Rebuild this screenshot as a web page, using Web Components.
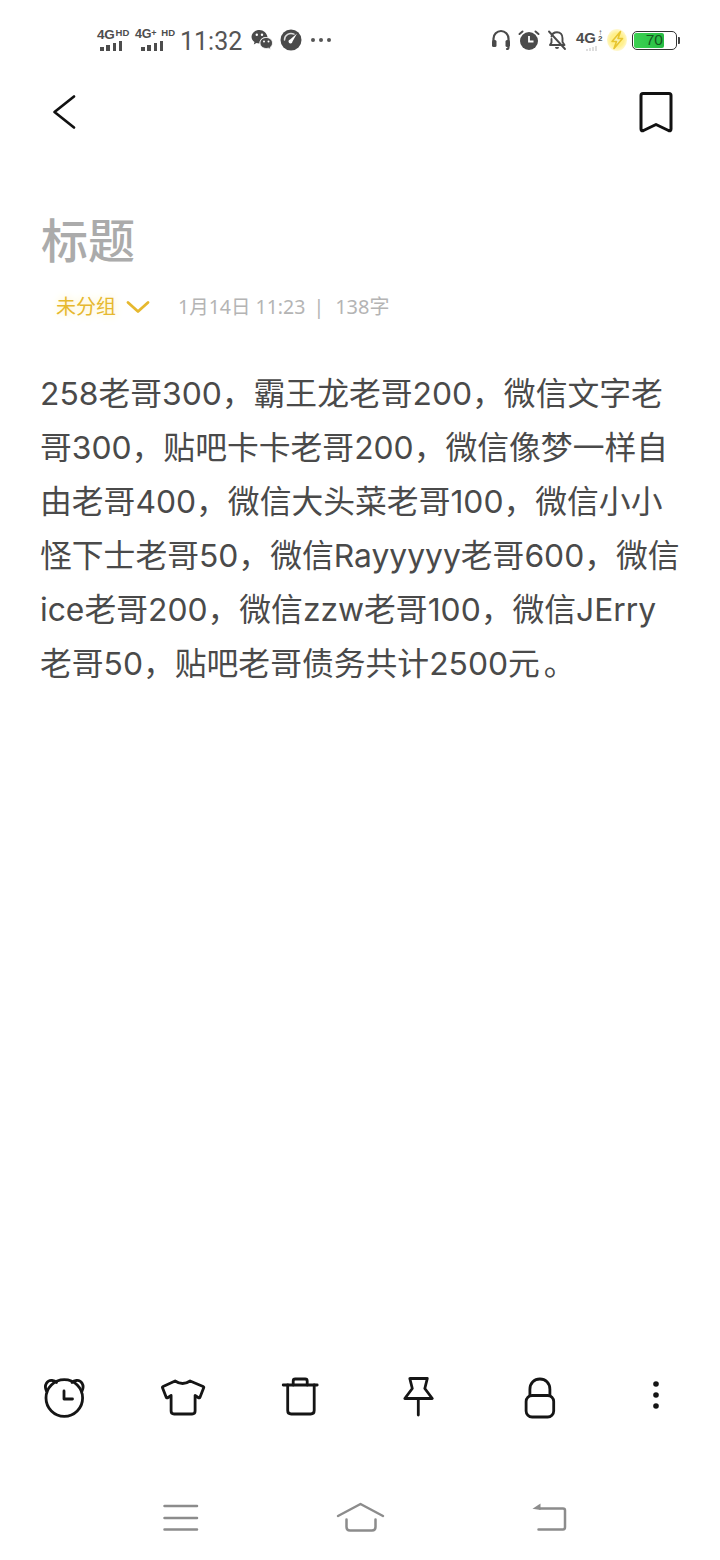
<!DOCTYPE html>
<html lang="zh">
<head>
<meta charset="utf-8">
<title>标题</title>
<style>
html,body{margin:0;padding:0;background:#fff}
body{font-family:"Noto Sans","Noto Sans CJK SC",sans-serif}
</style>
</head>
<body>
<note-page>
  <status-bar></status-bar>
  <top-bar></top-bar>
  <note-title>标题</note-title>
  <note-meta group="未分组" info="1月14日 11:23"  count="138字"></note-meta>
  <note-body>
    <span>258老哥300，霸王龙老哥200，微信文字老</span>
    <span>哥300，贴吧卡卡老哥200，微信像梦一样自</span>
    <span>由老哥400，微信大头菜老哥100，微信小小</span>
    <span>怪下士老哥50，微信Rayyyyy老哥600，微信</span>
    <span>ice老哥200，微信zzw老哥100，微信JErry</span>
    <span>老哥50，贴吧老哥债务共计2500元<b style="font-weight:400;margin-left:4px">。</b></span>
  </note-body>
  <tool-bar></tool-bar>
  <nav-bar></nav-bar>
</note-page>
<script>
const S='fill="none" stroke="currentColor" stroke-linecap="round" stroke-linejoin="round"';
const ICONS={
 back:[32,64,'48 80 32 64',`<path ${S} stroke-width="2.700" d="M74 96.500 54.500 112 74 127.500"/>`],
 bookmark:[48,64,'632 80 48 64',`<path ${S} stroke-width="3" d="M643 93.500H669Q671 93.500 671 95.500V129Q671 131.500 668.500 130.500L656 124.500 643.500 130.500Q641 131.500 641 129V95.500Q641 93.500 643 93.500Z"/>`],
 alarm:[48,48,'40 1374 48 48',`<g ${S} stroke-width="2.800"><circle cx="64.300" cy="1398" r="18.300"/><path d="M64 1391v8h8.500"/><path d="M46.500 1391C43.500 1385 47.500 1380 52 1380.500 54 1380.700 55.500 1381.500 56.500 1382.500"/><path d="M82 1391C85 1385 81 1380 76.500 1380.500 74.500 1380.700 73 1381.500 72 1382.500"/></g>`],
 shirt:[48,48,'158.400 1374 48 48',`<path ${S} stroke-width="2.800" d="M175.500 1381Q183 1386 190.500 1381L203.500 1386.500Q204.500 1387 204 1388L200.500 1397Q200 1398.500 198.500 1397.500L195.500 1395.500V1411Q195.500 1414 192.500 1414H174.500Q171.500 1414 171.500 1411V1395.500L168.500 1397.500Q167 1398.500 166.500 1397L163 1388Q162.500 1387 163.500 1386.500Z"/>`],
 trash:[48,48,'276.800 1374 48 48',`<g ${S} stroke-width="2.800"><path d="M283 1385H317"/><path d="M293 1385V1381Q293 1379 295 1379H305Q307 1379 307 1381V1385"/><path d="M287.500 1385V1410.500Q287.500 1414 291 1414H310.500Q314 1414 314 1410.500V1385"/></g>`],
 pin:[48,48,'395.200 1374 48 48',`<g ${S} stroke-width="2.800"><path d="M410 1378.500H427.500L425 1388.500 432.500 1398.500H405L412.500 1388.500Z"/><path d="M418.500 1398.500V1415"/></g>`],
 lock:[48,48,'513.600 1374 48 48',`<g ${S} stroke-width="2.800"><rect x="525.700" y="1395.500" width="27.600" height="21.500" rx="6"/><path d="M529.500 1395.500V1389.500C529.500 1383 534 1379 539.500 1379S549.500 1383 549.500 1389.500V1395.500"/></g>`],
 more:[48,48,'632 1374 48 48',`<g fill="currentColor"><circle cx="656" cy="1384" r="2.800"/><circle cx="656" cy="1395" r="2.800"/><circle cx="656" cy="1406" r="2.800"/></g>`],
 menu:[48,46,'157 1494 48 46',`<path ${S} stroke-width="2.500" stroke-linecap="butt" d="M164.500 1506H197M164.500 1518H197M164.500 1529.500H197"/>`],
 home:[56,46,'333 1494 56 46',`<g ${S} stroke-width="2.500"><path d="M338 1516 360.500 1504 383 1516"/><path d="M346.500 1519.500V1527Q346.500 1530.500 350 1530.500H372Q375.500 1530.500 375.500 1527V1519.500"/></g>`],
 goback:[48,46,'526 1494 48 46',`<path ${S} stroke-width="2.500" d="M540 1508.500H563Q565 1508.500 565 1510.500V1527Q565 1529.500 563 1529.500H538.500"/><path fill="currentColor" d="M532.500 1508.800 540.500 1503.500V1510Z"/>`],
 chevron:[26,14,'0 0 26 14',`<path ${S} stroke-width="2.800" d="M3 2.500 13 11.500 23 2.500"/>`],
 wechat:[22,22,'0 0 22 22',`<path fill="currentColor" d="M8.500 1C4 1 .5 4 .5 7.800c0 2.200 1.200 4 3 5.200l-.7 2.400 2.800-1.400c.8.200 1.700.4 2.600.4 0 0 .3 0 .4 0C8.300 11 11 8 15.500 8c.4 0 .7 0 1 .1C15.800 4 12.500 1 8.500 1Z"/><path fill="currentColor" d="M21.500 14c0-3.200-3-5.500-6.200-5.500-3.500 0-6.300 2.400-6.300 5.500s2.800 5.500 6.300 5.500c.8 0 1.500-.1 2.200-.3l2.300 1.300-.6-2.100c1.400-1 2.300-2.500 2.300-4.400Z" stroke="#fff" stroke-width=".8"/><g fill="#fff"><circle cx="5.800" cy="5.800" r="1.200"/><circle cx="11" cy="5.800" r="1.200"/><circle cx="13" cy="12.500" r="1"/><circle cx="17.500" cy="12.500" r="1"/></g>`],
 gauge:[22,22,'0 0 22 22',`<circle cx="11" cy="11" r="10.500" fill="currentColor"/><path fill="none" stroke="#ddd" stroke-width="1.500" stroke-linecap="round" d="M4.500 11A6.500 6.500 0 0 1 14 5.200"/><path fill="#fff" d="M17 4.500 12.500 12.500a2 2 0 1 1-2.400-2Z"/>`],
 headset:[20,22,'0 0 20 22',`<g ${S} stroke-width="2.200"><path d="M2.500 12V9.500a7.500 7.500 0 0 1 15 0V12"/><path d="M16 20c1 0 1.500-.5 1.500-1.700"/></g><g fill="currentColor"><rect x="1" y="11" width="4.500" height="7" rx="1.500"/><rect x="14.500" y="11" width="4.500" height="7" rx="1.500"/></g>`],
 salarm:[22,22,'0 0 22 22',`<circle cx="11" cy="12" r="9" fill="currentColor"/><path fill="none" stroke="#fff" stroke-width="1.800" d="M11 7v5.500h4.500"/><path fill="none" stroke="currentColor" stroke-width="2" stroke-linecap="round" d="M1.500 5 4.500 2.500M20.500 5 17.500 2.500"/>`],
 belloff:[20,22,'0 0 20 22',`<g ${S} stroke-width="1.900"><path d="M4.500 7.500C5 5 7 3.200 10 3.200c3.500 0 5.500 2.700 5.500 6V13l2 3H3l1.500-2.500V10"/><path d="M2 2.500 18 20"/></g><path fill="currentColor" d="M8 18h4a2 2 0 0 1-4 0Z"/>`],
 bolt:[20,22,'0 0 20 22',`<path fill="#f6f0b0" stroke="#e8c52e" stroke-width="1.600" stroke-linejoin="round" d="M13.500 2.500 5 12.500h4.500L7 19.500 15.500 9.500H11Z"/>`]
};
function def(name,fn){customElements.define(name,class extends HTMLElement{
  connectedCallback(){ if(this.shadowRoot)return; fn(this,this.attachShadow({mode:'open'})); }
});}
def('ui-icon',(el,r)=>{
  const i=ICONS[el.getAttribute('name')];
  r.innerHTML=`<style>:host{display:block;width:${i[0]}px;height:${i[1]}px;flex:none}svg{display:block;overflow:visible}</style><svg xmlns="http://www.w3.org/2000/svg" width="${i[0]}" height="${i[1]}" viewBox="${i[2]}">${i[3]}</svg>`;
});
def('note-page',(el,r)=>{
  r.innerHTML=`<style>:host{display:flex;flex-direction:column;width:720px;height:1560px;overflow:hidden;background:#fff}</style><slot></slot>`;
});
def('net-signal',(el,r)=>{
  const plus=el.hasAttribute('plus');
  r.innerHTML=`<style>
  :host{display:flex;flex-direction:column;align-items:flex-start;width:${plus?37:30}px;font-family:"Liberation Sans",sans-serif;color:#4d4d4d;font-weight:700;flex:none;white-space:nowrap}
  .t{display:flex;align-items:flex-start;height:11px;line-height:11px}
  .g{font-size:${plus?'12.500':'13.500'}px;letter-spacing:-.2px}
  .h{font-size:9.500px;line-height:8px;margin-left:1px}
  .p{font-size:9px;line-height:8px;width:9px}
  .b{display:flex;align-items:flex-end;gap:2.800px;height:11px;margin-left:${plus?'6px':'3px'}}
  .b i{display:block;width:3.500px;background:#4d4d4d}
  </style><div class="t"><span class="g">4G</span>${plus?'<span class="p">+</span>':''}<span class="h">HD</span></div>
  <div class="b"><i style="height:4px"></i><i style="height:6px"></i><i style="height:8px"></i><i style="height:10px"></i></div>`;
});
def('battery-meter',(el,r)=>{
  r.innerHTML=`<style>
  :host{display:flex;align-items:center;flex:none}
  .o{box-sizing:border-box;width:45px;height:19px;border:1.500px solid #333;border-radius:5px;padding:1px;display:flex}
  .f{box-sizing:border-box;width:30px;background:linear-gradient(90deg,#3bd152,#27bd42);border-radius:2px;display:flex;align-items:center;justify-content:flex-end;padding-right:1px;font:15.500px/1 "Liberation Sans",sans-serif;color:#17551f}
  .n{width:2px;height:7px;background:#444;margin-left:1px;border-radius:0 1px 1px 0}
  </style><div class="o"><div class="f">70</div></div><div class="n"></div>`;
});
def('status-bar',(el,r)=>{
  r.innerHTML=`<style>
  :host{display:flex;align-items:center;justify-content:space-between;height:80px;padding:0 40px 0 97px;color:#4a4a4a;box-sizing:border-box;flex:none}
  .l,.rt{display:flex;align-items:center}
  .time{font:400 25px/1 Roboto,"Liberation Sans",sans-serif;color:#555;margin:3px 9px 0 8px}
  .dots{display:flex;gap:4px;margin-left:9px}
  .dots i{width:4px;height:4px;border-radius:50%;background:#555;display:block}
  .four{display:flex;flex-direction:column;align-items:flex-start;width:24px;margin:0 7px 0 9px;font:700 15px/1 "Liberation Sans",sans-serif;color:#4d4d4d}
  .four .top{display:flex;align-items:flex-start;height:13px}
  .four small{display:flex;flex-direction:column;align-items:center;font-size:8px;line-height:6px;margin-left:2px}
  .four .dim{display:flex;gap:1.500px;align-items:flex-end;margin:3px 0 0 10px;height:5px}
  .four .dim i{display:block;width:1.500px;background:#ddd}
  .glow{width:20px;height:22px;border-radius:50%;background:radial-gradient(circle,#fff08c 45%,#fff8cf 72%,#fff 100%);margin-right:5px}
  </style>
  <div class="l">
    <net-signal></net-signal><span style="width:8px"></span><net-signal plus></net-signal>
    <span class="time">11:32</span>
    <ui-icon name="wechat"></ui-icon><span style="width:7px"></span>
    <ui-icon name="gauge"></ui-icon>
    <span class="dots"><i></i><i></i><i></i></span>
  </div>
  <div class="rt">
    <ui-icon name="headset"></ui-icon><span style="width:7px"></span>
    <ui-icon name="salarm"></ui-icon><span style="width:7px"></span>
    <ui-icon name="belloff"></ui-icon>
    <div class="four"><div class="top">4G<small><span>↑</span><span>2</span></small></div><div class="dim"><i style="height:2px"></i><i style="height:3px"></i><i style="height:4px"></i><i style="height:5px"></i></div></div>
    <div class="glow"><ui-icon name="bolt"></ui-icon></div>
    <battery-meter></battery-meter>
  </div>`;
});
def('top-bar',(el,r)=>{
  r.innerHTML=`<style>:host{display:flex;justify-content:space-between;height:64px;padding:0 40px 0 48px;color:#111;flex:none}</style>
  <ui-icon name="back"></ui-icon><ui-icon name="bookmark"></ui-icon>`;
});
def('note-title',(el,r)=>{
  r.innerHTML=`<style>:host{display:block;margin:64px 0 0 41px;font:500 47px/60px "Noto Sans CJK SC",sans-serif;color:#ababab;flex:none}</style><slot></slot>`;
});
def('note-meta',(el,r)=>{
  r.innerHTML=`<style>
  :host{display:flex;align-items:center;height:30px;margin:24px 0 0 56px;font:400 19.500px/30px "Noto Sans","Noto Sans CJK SC",sans-serif;color:#b4b4b4;flex:none}
  .g{color:#e6b82e;text-shadow:0 0 8px #ffeeb0;width:60px;white-space:nowrap;font-size:20px}
  ui-icon{margin:0 27px 0 9px;color:#e6b82e}
  .sep{margin:0 11px 0 8px}
  .c{font-size:20px}
  </style><span class="g">${el.getAttribute('group')}</span><ui-icon name="chevron"></ui-icon>
  <span>${el.getAttribute('info')}</span><span class="sep">|</span><span class="c">${el.getAttribute('count')}</span>`;
});
def('note-body',(el,r)=>{
  r.innerHTML=`<style>
  :host{display:block;margin:45px 0 0 40px;flex:1;font:400 31.800px/54px Inter,"Noto Sans CJK SC",sans-serif;color:#4a4a4a;white-space:nowrap}
  ::slotted(span){display:block;height:54px}
  </style><slot></slot>`;
});
def('tool-bar',(el,r)=>{
  r.innerHTML=`<style>:host{display:flex;justify-content:space-between;height:48px;padding:0 40px;color:#151515;flex:none}</style>
  ${['alarm','shirt','trash','pin','lock','more'].map(n=>`<ui-icon name="${n}"></ui-icon>`).join('')}`;
});
def('nav-bar',(el,r)=>{
  r.innerHTML=`<style>:host{display:flex;height:46px;margin:72px 0 20px;padding-left:157px;color:#8c8c8c;flex:none}
  .home{margin-left:128px}.goback{margin-left:137px}</style>
  <ui-icon name="menu"></ui-icon><ui-icon class="home" name="home"></ui-icon><ui-icon class="goback" name="goback"></ui-icon>`;
});
</script>
</body>
</html>
